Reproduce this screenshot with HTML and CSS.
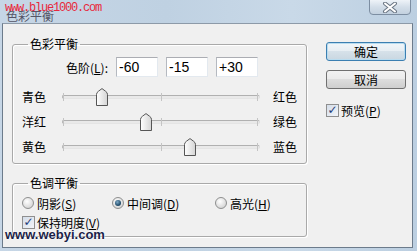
FILE: index.html
```html
<!DOCTYPE html>
<html lang="zh">
<head>
    <meta charset="UTF-8">
    <title>色彩平衡</title>
    <link rel="stylesheet" href="styles.css">
</head>
<body>
    <div class="window">
        <div class="titlebar">
            <span class="title">色彩平衡</span>
            <button class="close">
                <svg width="16" height="11" viewBox="0 0 16 11">
                    <path d="M3 1.5 L13 9.5 M13 1.5 L3 9.5" stroke="#6b7684" stroke-width="4" stroke-linecap="round"/>
                    <path d="M3 1.5 L13 9.5 M13 1.5 L3 9.5" stroke="#fff" stroke-width="2" stroke-linecap="round"/>
                </svg>
            </button>
        </div>
        <span class="mark-top">www.blue1000.com</span>

        <div class="dialog">
            <div class="main">
                <fieldset class="group group-color">
                    <legend>色彩平衡</legend>
                    <div class="levels">
                        <label class="levels-label">色阶(<u>L</u>):</label>
                        <input class="level" type="text" value="-60">
                        <input class="level" type="text" value="-15">
                        <input class="level" type="text" value="+30">
                    </div>
                    <div class="slider-row">
                        <span class="from">青色</span>
                        <div class="track">
                            <span class="tick tick-start"></span>
                            <span class="tick tick-mid"></span>
                            <span class="tick tick-end"></span>
                            <span class="thumb" style="left: 20%"><svg width="12" height="18" viewBox="0 0 12 18"><defs><linearGradient id="tg" x1="0" y1="0" x2="1" y2="0"><stop offset="0" stop-color="#fff"/><stop offset="1" stop-color="#d4d4d4"/></linearGradient></defs><path d="M0.5 17.5 V6.5 Q0.5 4.5 2.5 3.2 L6 0.6 L9.5 3.2 Q11.5 4.5 11.5 6.5 V17.5 Z" fill="url(#tg)" stroke="#555"/></svg></span>
                        </div>
                        <span class="to">红色</span>
                    </div>
                    <div class="slider-row">
                        <span class="from">洋红</span>
                        <div class="track">
                            <span class="tick tick-start"></span>
                            <span class="tick tick-mid"></span>
                            <span class="tick tick-end"></span>
                            <span class="thumb" style="left: 42.5%"><svg width="12" height="18" viewBox="0 0 12 18"><path d="M0.5 17.5 V6.5 Q0.5 4.5 2.5 3.2 L6 0.6 L9.5 3.2 Q11.5 4.5 11.5 6.5 V17.5 Z" fill="url(#tg)" stroke="#555"/></svg></span>
                        </div>
                        <span class="to">绿色</span>
                    </div>
                    <div class="slider-row">
                        <span class="from">黄色</span>
                        <div class="track">
                            <span class="tick tick-start"></span>
                            <span class="tick tick-mid"></span>
                            <span class="tick tick-end"></span>
                            <span class="thumb" style="left: 65%"><svg width="12" height="18" viewBox="0 0 12 18"><path d="M0.5 17.5 V6.5 Q0.5 4.5 2.5 3.2 L6 0.6 L9.5 3.2 Q11.5 4.5 11.5 6.5 V17.5 Z" fill="url(#tg)" stroke="#555"/></svg></span>
                        </div>
                        <span class="to">蓝色</span>
                    </div>
                </fieldset>

                <fieldset class="group group-tone">
                    <legend>色调平衡</legend>
                    <div class="radio-row">
                        <label class="radio r-shadow"><span class="dot"></span>阴影(<u>S</u>)</label>
                        <label class="radio r-mid"><span class="dot on"></span>中间调(<u>D</u>)</label>
                        <label class="radio"><span class="dot"></span>高光(<u>H</u>)</label>
                    </div>
                    <div class="check-row">
                        <label class="check"><span class="box">&#10003;</span>保持明度(<u>V</u>)</label>
                    </div>
                </fieldset>
            </div>

            <div class="side">
                <button class="btn btn-default">确定</button>
                <button class="btn">取消</button>
                <label class="check check-preview"><span class="box">&#10003;</span>预览(<u>P</u>)</label>
            </div>
        </div>
        <span class="mark-bottom">www.webyi.com</span>
    </div>
</body>
</html>
```

FILE: styles.css
```css
body {
    margin: 0;
    padding: 0;
    font-family: "Noto Sans CJK SC", "Liberation Sans", sans-serif;
    font-size: 12px;
    color: #000;
}
.window {
    position: relative;
    width: 417px;
    height: 251px;
    box-sizing: border-box;
    padding: 0 4px 3px 2px;
    background: linear-gradient(90deg, #c6d6e6, #bfd1e2 40%, #c9d9e8 70%, #bccfe1);
    overflow: hidden;
}
.titlebar { display: flex; justify-content: space-between; height: 23px; margin-left: -2px; margin-right: -4px; }
.title { margin: 9px 0 0 6px; font-size: 12px; line-height: 14px; color: #556; }
.close {
    width: 42px; height: 16px; margin: -1px 6px 0 0; padding: 0;
    border: 1px solid #7d8ea2; border-radius: 0 0 4px 4px;
    background: linear-gradient(#eef3f8, #d3dee9 50%, #c3d1df);
    display: flex; align-items: center; justify-content: center;
}
.mark-top {
    position: absolute; left: 5px; top: 1px;
    font-family: "Liberation Mono", monospace; font-size: 12px; letter-spacing: -1.2px;
    line-height: 14px; color: #e8283c;
}
.mark-bottom {
    position: absolute; left: 5px; top: 227px;
    font-family: "Liberation Sans", Arial, sans-serif; font-weight: bold; font-size: 13px;
    line-height: 15px; color: #1c1f48;
    text-shadow: 0 0 2px #fff, 0 0 1px #fff;
}

.dialog {
    display: flex;
    height: 225px;
    box-sizing: border-box;
    border: 1px solid #6c7b8b;
    border-top-color: #8d9aa8;
    background: #f0f0f0;
}
.main { padding-left: 9px; }
.group {
    width: 295px; box-sizing: border-box;
    margin: 0; padding: 0; min-width: 0;
    border: 1px solid #a9a9a9; border-radius: 3px;
    box-shadow: inset 1px 1px 0 #fff, 1px 1px 0 #fff;
}
.group legend { margin-left: 15px; padding: 0 2px; line-height: 14px; }
.group-color { margin-top: 13px; padding-bottom: 4px; }
.group-tone { margin-top: 12px; padding-bottom: 6px; }

.levels { display: flex; align-items: center; gap: 8px; margin: 6px 0 7px; height: 20px; }
.levels-label { width: 95px; text-align: right; }
.level {
    width: 42px; height: 20px; box-sizing: border-box; margin: 0; padding: 0 2px;
    border: 1px solid #abadb3; border-color: #abadb3 #e3e9ef #e3e9ef #b5b9c0;
    background: #fff; font-family: "Liberation Sans", Arial, sans-serif; font-size: 14px; color: #000;
}

.slider-row { display: flex; align-items: center; height: 25px; padding-left: 9px; }
.from { width: 40px; }
.to { margin-left: 13px; }
.track {
    position: relative; width: 198px; height: 4px; box-sizing: border-box;
    border: 1px solid #b0b0b0; border-bottom-color: #e4e4e4; border-right-color: #dcdcdc;
    background: #e9e9e9; border-radius: 2px;
}
.tick { position: absolute; top: -3px; width: 1px; height: 8px; background: #c4c4c4; }
.tick-start { left: 0; }
.tick-mid { left: 98px; }
.tick-end { right: 1px; }
.thumb { position: absolute; top: -8px; width: 12px; height: 18px; margin-left: -6px; }
.thumb svg { display: block; }

.radio-row { display: flex; align-items: center; height: 16px; margin-top: 5px; padding-left: 9px; }
.check-row { display: flex; align-items: center; height: 16px; margin-top: 3px; padding-left: 9px; }
.radio { display: flex; align-items: center; }
.r-shadow { width: 90px; }
.r-mid { width: 103px; }
.dot {
    width: 12px; height: 12px; box-sizing: border-box; margin-right: 3px;
    border: 1px solid #8e8f8f; border-radius: 50%;
    background: radial-gradient(circle at 40% 35%, #fff, #d9d9d9 70%, #c8c8c8);
    display: flex; align-items: center; justify-content: center;
}
.dot.on::after {
    content: ""; width: 6px; height: 6px; border-radius: 50%;
    background: radial-gradient(circle at 40% 35%, #7fa9c6, #24506f 60%, #16324a);
}
.check { display: flex; align-items: center; }
.box {
    width: 13px; height: 13px; box-sizing: border-box; margin-right: 2px;
    border: 1px solid #8f8f8f;
    background: linear-gradient(135deg, #d4dde9, #f2f5f9);
    color: #1e3b78; font-family: "DejaVu Sans", sans-serif; font-weight: bold;
    font-size: 12px; line-height: 11px; text-align: center;
}

.side { display: flex; flex-direction: column; align-items: flex-start; margin-left: 19px; padding-top: 18px; }
.btn {
    width: 80px; height: 19px; margin: 0 0 9px; padding: 0;
    border: 1px solid #707070; border-radius: 3px;
    background: linear-gradient(#f2f2f2, #ebebeb 45%, #dddddd 50%, #cfcfcf);
    font-family: "Noto Sans CJK SC", sans-serif; font-size: 12px; line-height: 16px; color: #000;
}
.btn-default { border-color: #3c7fb1; box-shadow: inset 0 0 0 1px #b9dcef; background: linear-gradient(#f2f6f9, #e7eef3 45%, #d6e1e9 50%, #c9d7e1); }
.check-preview { margin-top: 4px; height: 16px; }
```
